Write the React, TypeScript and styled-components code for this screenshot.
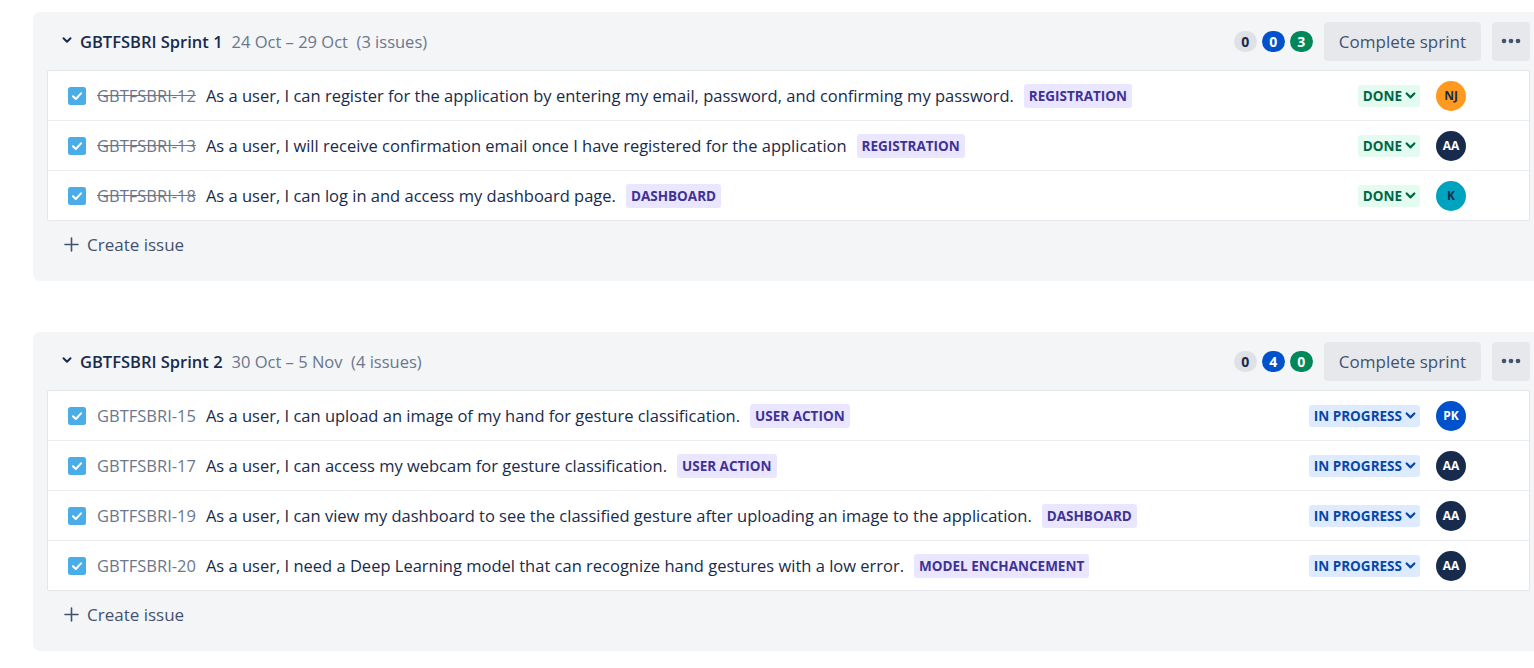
import React from 'react';
import styled, { createGlobalStyle } from 'styled-components';

const GlobalStyle = createGlobalStyle`
    body {
        margin: 0;
        background: #ffffff;
        overflow: hidden;
        font-family: "Open Sans", "Noto Sans", Arial, sans-serif;
        color: #172b4d;
    }
`

type Status = 'done' | 'progress';

interface Issue {
    id: string;
    summary: string;
    label: string;
    status: Status;
    avatar: string;
    avatarBg: string;
    avatarFg: string;
}

interface SprintData {
    name: string;
    dates: string;
    count: string;
    todo: number;
    progress: number;
    done: number;
    issues: Issue[];
}

const sprints: SprintData[] = [
    {
        name: 'GBTFSBRI Sprint 1',
        dates: '24 Oct – 29 Oct',
        count: '(3 issues)',
        todo: 0,
        progress: 0,
        done: 3,
        issues: [
            { id: 'GBTFSBRI-12', summary: 'As a user, I can register for the application by entering my email, password, and confirming my password.', label: 'REGISTRATION', status: 'done', avatar: 'NJ', avatarBg: '#ff991f', avatarFg: '#172b4d' },
            { id: 'GBTFSBRI-13', summary: 'As a user, I will receive confirmation email once I have registered for the application', label: 'REGISTRATION', status: 'done', avatar: 'AA', avatarBg: '#172b4d', avatarFg: '#ffffff' },
            { id: 'GBTFSBRI-18', summary: 'As a user, I can log in and access my dashboard page.', label: 'DASHBOARD', status: 'done', avatar: 'K', avatarBg: '#00a3bf', avatarFg: '#172b4d' },
        ],
    },
    {
        name: 'GBTFSBRI Sprint 2',
        dates: '30 Oct – 5 Nov',
        count: '(4 issues)',
        todo: 0,
        progress: 4,
        done: 0,
        issues: [
            { id: 'GBTFSBRI-15', summary: 'As a user, I can upload an image of my hand for gesture classification.', label: 'USER ACTION', status: 'progress', avatar: 'PK', avatarBg: '#0052cc', avatarFg: '#ffffff' },
            { id: 'GBTFSBRI-17', summary: 'As a user, I can access my webcam for gesture classification.', label: 'USER ACTION', status: 'progress', avatar: 'AA', avatarBg: '#172b4d', avatarFg: '#ffffff' },
            { id: 'GBTFSBRI-19', summary: 'As a user, I can view my dashboard to see the classified gesture after uploading an image to the application.', label: 'DASHBOARD', status: 'progress', avatar: 'AA', avatarBg: '#172b4d', avatarFg: '#ffffff' },
            { id: 'GBTFSBRI-20', summary: 'As a user, I need a Deep Learning model that can recognize hand gestures with a low error.', label: 'MODEL ENCHANCEMENT', status: 'progress', avatar: 'AA', avatarBg: '#172b4d', avatarFg: '#ffffff' },
        ],
    },
];

const Page = styled.div`
    display: flex;
    flex-direction: column;
    gap: 51px;
    padding: 12px 0 0 33px;
`

const Sprint = styled.section`
    background: #f4f5f7;
    border-radius: 7px;
    padding: 0 14px;
    margin-right: -10px;
`

const Header = styled.div`
    height: 58px;
    display: flex;
    align-items: center;
    padding-left: 15px;
`

const Chevron = styled.svg`
    width: 10px;
    height: 10px;
    margin-right: 8px;
    margin-top: -2px;
`

const Title = styled.span`
    font-size: 16.5px;
    font-weight: 600;
    color: #172b4d;
    margin-right: 9px;
`

const Dates = styled.span`
    font-size: 16.5px;
    color: #6b778c;
    white-space: pre;
`

const Spacer = styled.div`
    flex: 1;
`

const Counts = styled.div`
    display: flex;
    gap: 5px;
    margin-right: 11px;
`

const Count = styled.span<{ $bg: string; $fg: string }>`
    min-width: 23px;
    height: 21px;
    border-radius: 11px;
    background: ${p => p.$bg};
    color: ${p => p.$fg};
    font-size: 14px;
    font-weight: 700;
    display: flex;
    align-items: center;
    justify-content: center;
`

const Button = styled.button`
    height: 39px;
    border: none;
    border-radius: 4px;
    background: #e6e8ec;
    color: #42526e;
    font-family: inherit;
    font-size: 17px;
    padding: 0 15px;
    display: flex;
    align-items: center;
    justify-content: center;
`

const MoreButton = styled(Button)`
    width: 38px;
    padding: 0;
    margin-left: 11px;
`

const List = styled.div`
    background: #ffffff;
    border: 1px solid #e4e6ea;
    border-radius: 2px;
`

const Row = styled.div`
    height: 49px;
    display: flex;
    align-items: center;
    padding: 0 63px 0 20px;
    & + & {
        border-top: 1px solid #ebecf0;
    }
`

const Check = styled.svg`
    width: 18px;
    height: 18px;
    flex-shrink: 0;
    margin-right: 11px;
`

const Key = styled.span<{ $struck: boolean }>`
    font-size: 16.5px;
    color: #6b778c;
    text-decoration: ${p => (p.$struck ? 'line-through' : 'none')};
    margin-right: 10px;
    white-space: nowrap;
`

const Summary = styled.span`
    font-size: 16.5px;
    color: #172b4d;
    margin-right: 10px;
    white-space: nowrap;
`

const Label = styled.span`
    height: 24px;
    display: flex;
    align-items: center;
    background: #eae6ff;
    color: #403294;
    font-size: 13.5px;
    font-weight: 700;
    padding: 0 5px;
    border-radius: 3px;
    white-space: nowrap;
`

const Lozenge = styled.span<{ $status: Status }>`
    display: flex;
    align-items: center;
    gap: 3px;
    height: 22px;
    padding: 0 4px 0 5px;
    border-radius: 3px;
    font-size: 13.5px;
    font-weight: 700;
    background: ${p => (p.$status === 'done' ? '#e3fcef' : '#deebff')};
    color: ${p => (p.$status === 'done' ? '#006644' : '#0747a6')};
    margin-right: 16px;
`

const Avatar = styled.span<{ $bg: string; $fg: string }>`
    width: 30px;
    height: 30px;
    border-radius: 50%;
    background: ${p => p.$bg};
    color: ${p => p.$fg};
    font-size: 12px;
    font-weight: 700;
    display: flex;
    align-items: center;
    justify-content: center;
    flex-shrink: 0;
`

const Footer = styled.div`
    height: 60px;
    padding: 8px 0 0 17px;
    box-sizing: border-box;
`

const CreateIssue = styled.div`
    height: 30px;
    display: flex;
    align-items: center;
    gap: 8px;
    color: #42526e;
    font-size: 17px;
    font-weight: 500;
`

const ChevronDown = ({ size = 10 }: { size?: number }) => (
    <svg width={size} height={size} viewBox="0 0 10 10">
        <path d="M1.5 3.2 L5 6.7 L8.5 3.2" fill="none" stroke="currentColor" strokeWidth="2" strokeLinecap="round" strokeLinejoin="round" />
    </svg>
);

const SprintBlock = ({ sprint }: { sprint: SprintData }) => (
    <Sprint>
        <Header>
            <Chevron viewBox="0 0 10 10">
                <path d="M1.5 3.2 L5 6.7 L8.5 3.2" fill="none" stroke="#172b4d" strokeWidth="2" strokeLinecap="round" strokeLinejoin="round" />
            </Chevron>
            <Title>{sprint.name}</Title>
            <Dates>{sprint.dates}  {sprint.count}</Dates>
            <Spacer />
            <Counts>
                <Count $bg="#dfe1e6" $fg="#172b4d">{sprint.todo}</Count>
                <Count $bg="#0052cc" $fg="#ffffff">{sprint.progress}</Count>
                <Count $bg="#00875a" $fg="#ffffff">{sprint.done}</Count>
            </Counts>
            <Button>Complete sprint</Button>
            <MoreButton>
                <svg width="20" height="6" viewBox="0 0 20 6">
                    <circle cx="3" cy="3" r="2.3" fill="#42526e" />
                    <circle cx="10" cy="3" r="2.3" fill="#42526e" />
                    <circle cx="17" cy="3" r="2.3" fill="#42526e" />
                </svg>
            </MoreButton>
        </Header>
        <List>
            {sprint.issues.map(issue => (
                <Row key={issue.id}>
                    <Check viewBox="0 0 18 18">
                        <rect width="18" height="18" rx="2.5" fill="#4bade8" />
                        <path d="M5 9.2 L7.8 12 L13 6.3" fill="none" stroke="#ffffff" strokeWidth="2" strokeLinecap="round" strokeLinejoin="round" />
                    </Check>
                    <Key $struck={issue.status === 'done'}>{issue.id}</Key>
                    <Summary>{issue.summary}</Summary>
                    <Label>{issue.label}</Label>
                    <Spacer />
                    <Lozenge $status={issue.status}>
                        {issue.status === 'done' ? 'DONE' : 'IN PROGRESS'}
                        <ChevronDown size={11} />
                    </Lozenge>
                    <Avatar $bg={issue.avatarBg} $fg={issue.avatarFg}>{issue.avatar}</Avatar>
                </Row>
            ))}
        </List>
        <Footer>
            <CreateIssue>
                <svg width="15" height="15" viewBox="0 0 15 15">
                    <path d="M7.5 1 V14 M1 7.5 H14" stroke="#42526e" strokeWidth="1.6" strokeLinecap="round" />
                </svg>
                Create issue
            </CreateIssue>
        </Footer>
    </Sprint>
);

const App = () => {
    return (
        <>
            <GlobalStyle />
            <Page>
                {sprints.map(s => (
                    <SprintBlock key={s.name} sprint={s} />
                ))}
            </Page>
        </>
    );
};

export default App;
